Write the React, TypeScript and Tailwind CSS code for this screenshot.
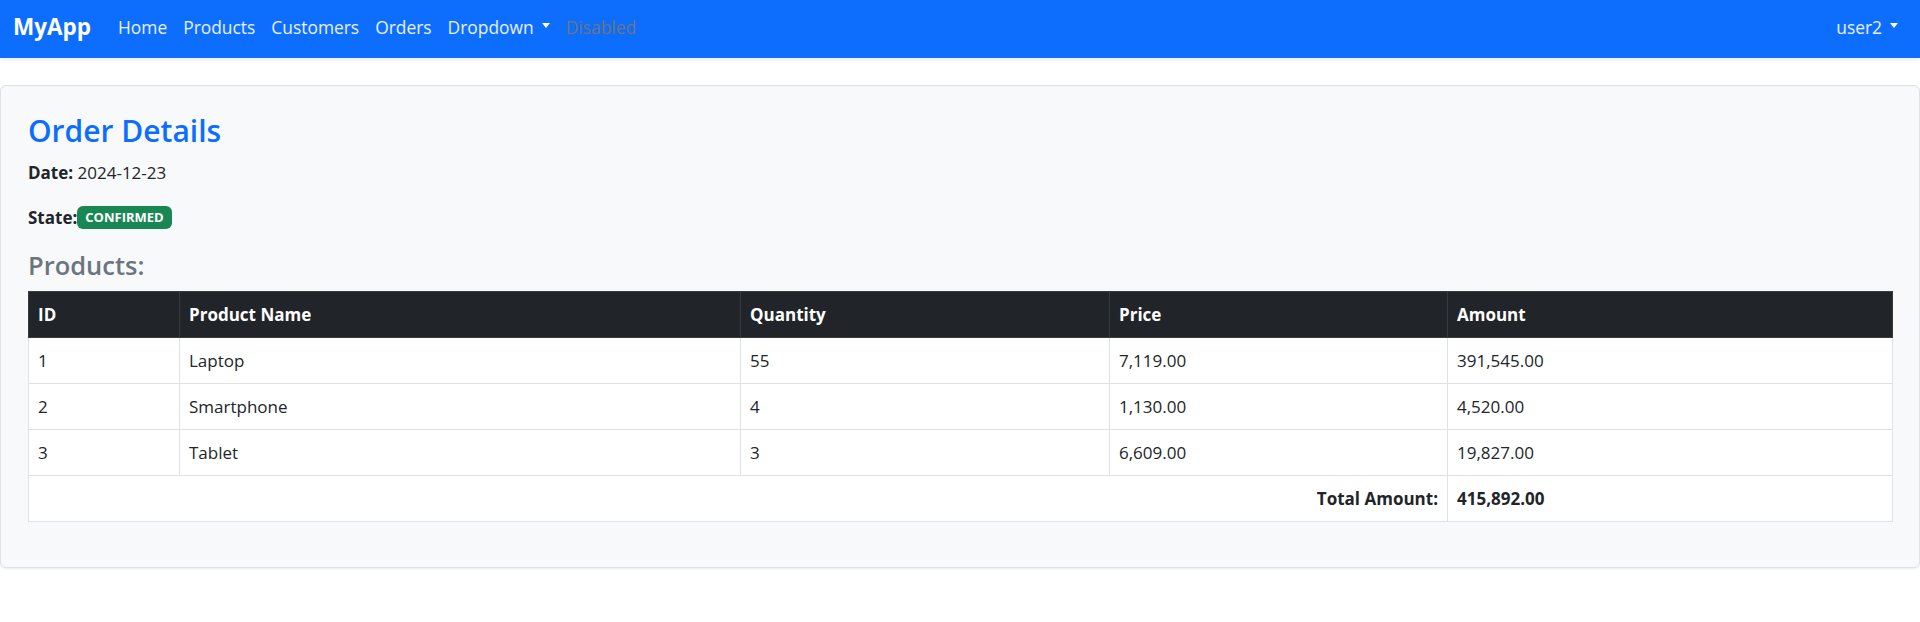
import { useState } from "react";

const products = [
  { id: 1, name: "Laptop", quantity: 55, price: 7119, amount: 391545 },
  { id: 2, name: "Smartphone", quantity: 4, price: 1130, amount: 4520 },
  { id: 3, name: "Tablet", quantity: 3, price: 6609, amount: 19827 },
];

const money = (n: number) =>
  n.toLocaleString("en-US", { minimumFractionDigits: 2, maximumFractionDigits: 2 });

const Caret = () => (
  <span className="inline-block w-0 h-0 ml-[8px] border-x-[4.5px] border-x-transparent border-t-[5px] border-t-white translate-y-[-1px]" />
);

const Navbar = () => {
  const links = ["Home", "Products", "Customers", "Orders"];
  return (
    <nav className="h-[58px] bg-[#0d6efd] flex items-center justify-between pl-[13px] pr-[14px] pb-[4px] shadow-[0_2px_4px_rgba(0,0,0,0.08)]">
      <div className="flex items-center">
        <a className="text-white font-bold text-[22.5px] mr-[19px]">MyApp</a>
        {links.map((l) => (
          <a key={l} className="px-2 text-[17.4px] text-white/90">
            {l}
          </a>
        ))}
        <a className="px-2 text-[17.4px] text-white/90 flex items-center">
          Dropdown
          <Caret />
        </a>
        <a className="px-2 text-[17.4px] text-[#6c757d]">Disabled</a>
      </div>
      <a className="px-2 text-[17.4px] text-white/90 flex items-center">
        user2
        <Caret />
      </a>
    </nav>
  );
};

const App = () => {
  const [items] = useState(products);
  const total = items.reduce((s, p) => s + p.amount, 0);

  return (
    <div className="min-h-screen bg-white text-[#212529] font-['Open_Sans','Noto_Sans',sans-serif] text-[17px]">
      <Navbar />

      <div className="mt-[27px] border border-[#dee2e6] rounded-md bg-[#f8f9fa] shadow-[0_1px_3px_rgba(0,0,0,0.08)] px-[27px] pt-[26px] pb-[45px]">
        <h2 className="text-[30px] leading-[1.25] font-semibold text-[#0d6efd]">Order Details</h2>
        <p className="mt-[10px] leading-[1.5]">
          <span className="font-bold">Date:</span> 2024-12-23
        </p>
        <div className="mt-[20px] flex items-center leading-[1.5]">
          <span className="font-bold">State:</span>
          <span className="h-[23px] px-[8px] flex items-center rounded-[6px] bg-[#198754] text-white text-[13px] font-bold">
            CONFIRMED
          </span>
        </div>
        <h4 className="mt-[19px] text-[25.5px] leading-[1.2] font-semibold text-[#6c757d]">Products:</h4>

        <table className="mt-[11px] w-full table-fixed border-collapse border border-[#dee2e6] bg-white">
          <colgroup>
            <col className="w-[151px]" />
            <col className="w-[561px]" />
            <col className="w-[369px]" />
            <col className="w-[338px]" />
            <col className="w-[445px]" />
          </colgroup>
          <thead>
            <tr className="h-[46px] bg-[#212529] text-white">
              {["ID", "Product Name", "Quantity", "Price", "Amount"].map((h) => (
                <th key={h} className="px-[9px] text-left font-bold border border-[#373b3e]">
                  {h}
                </th>
              ))}
            </tr>
          </thead>
          <tbody>
            {items.map((p) => (
              <tr key={p.id} className="h-[46px]">
                <td className="px-[9px] border border-[#dee2e6]">{p.id}</td>
                <td className="px-[9px] border border-[#dee2e6]">{p.name}</td>
                <td className="px-[9px] border border-[#dee2e6]">{p.quantity}</td>
                <td className="px-[9px] border border-[#dee2e6]">{money(p.price)}</td>
                <td className="px-[9px] border border-[#dee2e6]">{money(p.amount)}</td>
              </tr>
            ))}
            <tr className="h-[46px]">
              <td colSpan={4} className="px-[9px] text-right font-bold border border-[#dee2e6]">
                Total Amount:
              </td>
              <td className="px-[9px] font-bold border border-[#dee2e6]">{money(total)}</td>
            </tr>
          </tbody>
        </table>
      </div>
    </div>
  );
};

export default App;
